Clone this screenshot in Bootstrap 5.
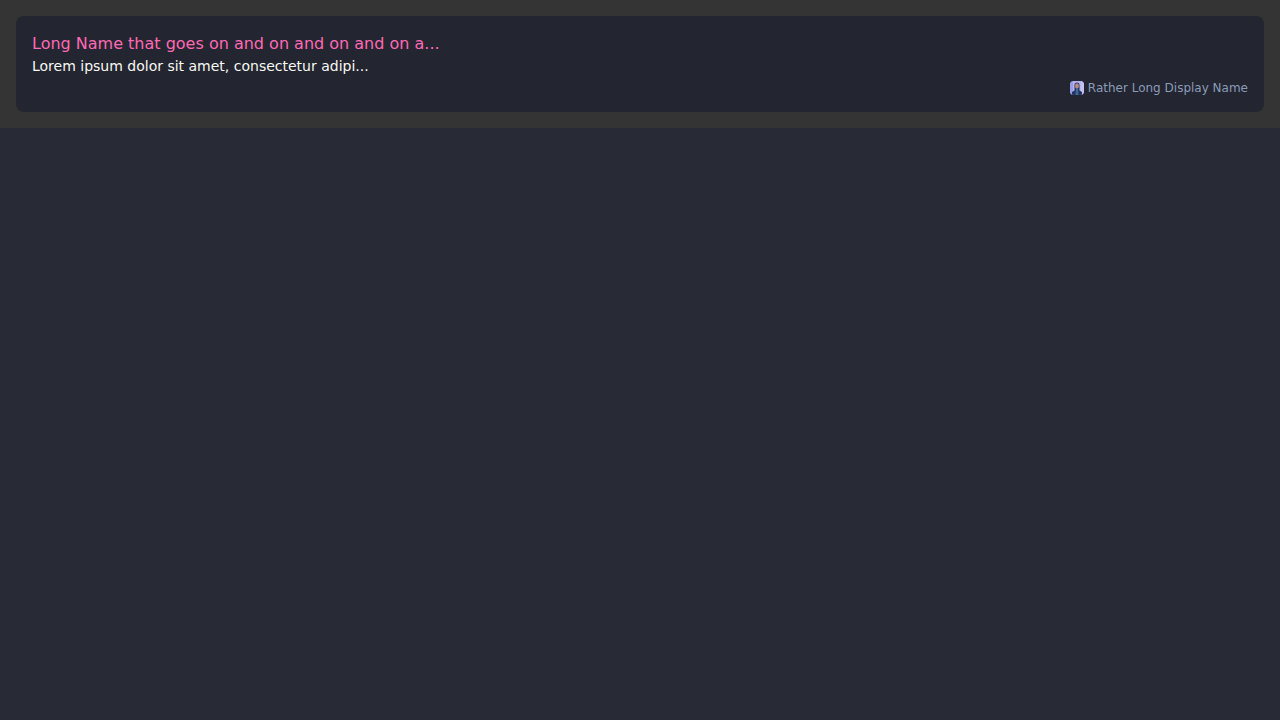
<!DOCTYPE html>
<html lang="en">
<head>
<meta charset="utf-8">
<title>Card</title>
<link rel="stylesheet" href="https://cdn.jsdelivr.net/npm/bootstrap@5.3.0/dist/css/bootstrap.min.css">
<style>
html, body { height: 100%; }
body { background: #282a36; font-family: "DejaVu Sans", sans-serif; }
.strip { background: #343434; height: 128px; }
.tile { background: #232530; height: 96px; border-radius: 8px; padding-top: 16px; }
.tile-title { color: #ff69b4; font-size: 16px; line-height: 24px; }
.tile-text { color: #f8f8f2; font-size: 14px; line-height: 21px; }
.tile-author { color: #8a9bb8; font-size: 12px; line-height: 18px; margin-top: 2px; }
.avatar { width: 14px; height: 14px; border-radius: 4px; display: block; }
</style>
</head>
<body>
<div class="strip p-3">
  <div class="tile px-3 d-flex flex-column">
    <div class="tile-title">Long Name that goes on and on and on and on a...</div>
    <div class="tile-text">Lorem ipsum dolor sit amet, consectetur adipi...</div>
    <div class="tile-author d-flex justify-content-end align-items-center gap-1">
      <svg class="avatar" viewBox="0 0 14 14" aria-hidden="true">
        <rect width="14" height="14" fill="#b4b4f0"/>
        <path d="M0 0h3v14H0Z" fill="#9a9ce8"/>
        <path d="M11 0h3v14h-3Z" fill="#c4c0f0"/>
        <path d="M2 14V11L4.500 9.500 4.500 4C4.500 .8 9.500 .8 9.500 4V9.500L12 11V14Z" fill="#24325f"/>
        <ellipse cx="7" cy="5" rx="1.900" ry="2.800" fill="#b98a80"/>
        <path d="M6 7.500h2l.6 6.500h-3.200Z" fill="#3a6a9a"/>
      </svg>
      <span>Rather Long Display Name</span>
    </div>
  </div>
</div>
</body>
</html>
